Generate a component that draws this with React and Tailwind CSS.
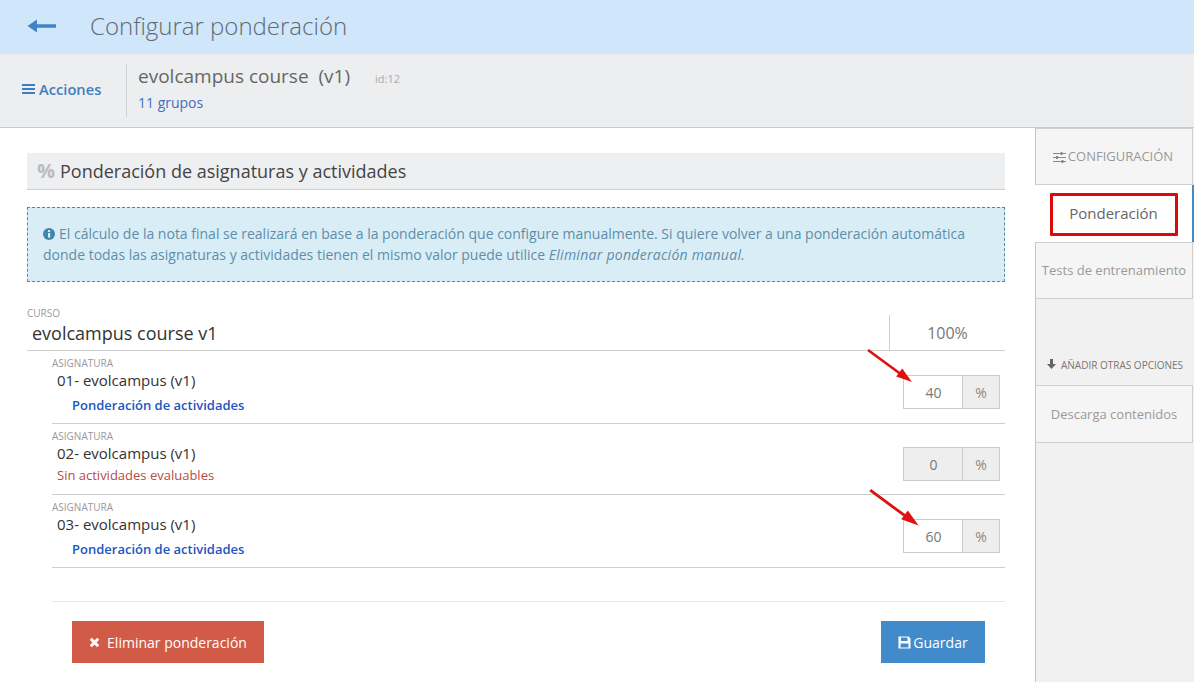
import React from "react";

const font = { fontFamily: '"Open Sans", sans-serif' };

function Arrow({ className }) {
  return (
    <svg className={className} viewBox="0 0 50 40">
      <path d="M2 2 L36 27" stroke="#e01010" strokeWidth="2.6" fill="none" />
      <path d="M46 34 L30.2 28.4 L36.2 20.4 Z" fill="#e01010" />
    </svg>
  );
}

function Row({ num, value, disabled, h, children }) {
  return (
    <div className={`flex justify-between border-b border-[#cfcfcf] ${h}`}>
      <div className="flex flex-col">
        <div className="mt-[7px] h-[11px] text-[10px] leading-[11px] text-[#999] uppercase">Asignatura</div>
        <div className="ml-[5px] mt-[2px] h-[19px] text-[15px] leading-[19px] text-[#333]">{num}- evolcampus (v1)</div>
        {children}
      </div>
      <div className="flex items-center pr-[5px] pt-[10px]">
        <div className={`flex h-[34px] w-[97px] border border-[#ccc] text-[14px] text-[#777] ${disabled ? "bg-[#eeeeee]" : "bg-white"}`}>
          <div className="flex w-[59px] items-center justify-center border-r border-[#ccc] pt-[1px] pl-[1px]">{value}</div>
          <div className="flex flex-1 items-center justify-center bg-[#eeeeee] text-[14px] text-[#8a8a8a]">%</div>
        </div>
      </div>
    </div>
  );
}

function Link() {
  return <div className="ml-[20px] mt-[7px] text-[13px] leading-[17px] font-semibold text-[#1c56bf]">Ponderación de actividades</div>;
}

export default function App() {
  return (
    <div style={font} className="relative flex h-[682px] w-[1194px] flex-col overflow-hidden bg-white">
      <header className="flex h-[54px] items-center bg-[#cfe6fb] pl-[27px]">
        <svg width="30" height="16" viewBox="0 0 30 16" className="mb-[3px]">
          <path d="M29 6.3 H10 V1.5 L0.5 8 L10 14.5 V9.7 H29 Z" fill="#3f84c5" />
        </svg>
        <h1 className="ml-[33px] mb-[2px] text-[24px] font-light leading-[32px] text-[#5f6b73]">Configurar ponderación</h1>
      </header>

      <div className="flex h-[74px] items-center border-b border-[#c9cbcd] bg-[#eceef0]">
        <div className="mb-[3px] flex w-[126px] items-center pl-[22px] text-[14.7px] font-semibold text-[#3f7fbd]">
          <svg width="13" height="12" viewBox="0 0 13 12" className="mr-[4px]">
            <path d="M0 1h13v2H0zM0 5h13v2H0zM0 9h13v2H0z" fill="#3f7fbd" />
          </svg>
          Acciones
        </div>
        <div className="flex h-[53px] flex-col border-l border-[#cfd1d3] pl-[11px]">
          <div className="flex items-baseline">
            <span className="whitespace-pre text-[19px] leading-[24px] text-[#666]">evolcampus course  (v1)</span>
            <span className="ml-[25px] text-[11px] text-[#aaa]">id:12</span>
          </div>
          <div className="mt-[6px] text-[14px] leading-[18px] text-[#3b6fc9]">11 grupos</div>
        </div>
      </div>

      <div className="flex min-h-0 flex-1">
        <main className="relative w-[1035px] pl-[27px] pr-[30px] pt-[25px]">
          <div className="flex h-[37px] items-center border-b border-[#cfd1d3] bg-[#eeeff1] pl-[10px]">
            <span className="mr-[5px] text-[20px] font-bold leading-none text-[#bbbbbb]">%</span>
            <h2 className="text-[18px] leading-[24px] text-[#444]">Ponderación de asignaturas y actividades</h2>
          </div>

          <div className="mt-[17px] h-[75px] border border-dashed border-[#4b8aa8] bg-[#d9edf7] px-[15px] py-[15px] text-[14px] leading-[21px] text-[#5f8da8]">
            <p>
              <svg width="12" height="12" viewBox="0 0 12 12" className="mr-[4px] inline-block align-[-1px]">
                <circle cx="6" cy="6" r="6" fill="#3f86ad" />
                <rect x="5" y="5" width="2.2" height="4.6" fill="#d9edf7" />
                <rect x="5" y="2.2" width="2.2" height="1.8" fill="#d9edf7" />
              </svg>
              El cálculo de la nota final se realizará en base a la ponderación que configure manualmente. Si quiere volver a una ponderación automática donde todas las asignaturas y actividades tienen el mismo valor puede utilice <em className="tracking-[0.28px]">Eliminar ponderación manual.</em>
            </p>
          </div>

          <div className="mt-[25px] flex h-[44px] border-b border-[#cfcfcf]">
            <div className="flex-1">
              <div className="h-[12px] text-[10px] leading-[12px] text-[#999]">CURSO</div>
              <div className="ml-[5px] mt-[2px] text-[18px] leading-[24px] text-[#333]">evolcampus course v1</div>
            </div>
            <div className="mt-[8px] flex w-[116px] items-center justify-center border-l border-[#cfcfcf] text-[16px] text-[#777]">100%</div>
          </div>

          <div className="ml-[25px]">
            <Row num="01" value="40" h="h-[73px]"><Link /></Row>
            <Row num="02" value="0" disabled h="h-[71px]">
              <div className="mt-[4px] text-[13px] leading-[17px] ml-[5px] text-[#b94a48]">Sin actividades evaluables</div>
            </Row>
            <Row num="03" value="60" h="h-[73px]"><Link /></Row>
            <div className="mt-[33px] border-t border-[#e6e6e6]" />
            <div className="mt-[19px] flex justify-between pl-[20px] pr-[20px]">
              <button className="flex h-[42px] w-[192px] items-center justify-center bg-[#d15b47] text-[14px] text-white">
                <svg width="11" height="11" viewBox="0 0 11 11" className="mr-[7px]">
                  <path d="M1.8 1.8 L9.2 9.2 M9.2 1.8 L1.8 9.2" stroke="#fff" strokeWidth="3" />
                </svg>
                Eliminar ponderación
              </button>
              <button className="flex h-[42px] w-[104px] items-center justify-center bg-[#428bca] text-[14px] text-white">
                <svg width="13" height="13" viewBox="0 0 13 13" className="mr-[2px]">
                  <path fillRule="evenodd" d="M0.5 0.5 H10.5 L12.5 2.5 V12.5 H0.5 Z M3 1.5 V5 H9.5 V1.5 Z M2.5 7.5 V11.5 H10.5 V7.5 Z" fill="#fff" />
                </svg>
                Guardar
              </button>
            </div>
          </div>

          <Arrow className="absolute left-[866px] top-[220px] h-[40px] w-[50px]" />
          <Arrow className="absolute left-[868px] top-[360px] h-[44px] w-[55px]" />
        </main>

        <aside className="relative flex-1 border-l border-[#c6c6c6] bg-[#f1f1f1]">
          <div className="flex h-[57px] w-[157px] items-center justify-center border-y border-r border-[#d0d0d0] bg-[#f5f5f5] pr-[2px] pt-[1px] text-[13px] text-[#999]">
            <svg width="13" height="11" viewBox="0 0 13 11" className="mr-[2px]">
              <path d="M0 1.5h13M0 5.5h13M0 9.5h13" stroke="#888" strokeWidth="1" />
              <rect x="7.5" y="0" width="2" height="3" fill="#888" />
              <rect x="3" y="4" width="2" height="3" fill="#888" />
              <rect x="8.5" y="8" width="2" height="3" fill="#888" />
            </svg>
            CONFIGURACIÓN
          </div>
          <div className="ml-[-1px] flex h-[57px] w-[159px] items-center justify-center border-r-2 border-[#428bca] bg-white text-[15px] text-[#666]">Ponderación</div>
          <div className="flex h-[57px] w-[157px] items-center justify-center border-y border-r border-[#d0d0d0] bg-[#f5f5f5] pt-[1px] text-[13px] text-[#999]">Tests de entrenamiento</div>
          <div className="mt-[59px] flex h-[27px] items-start pl-[11px] text-[10px] font-medium leading-[14px] text-[#777]">
            <svg width="9" height="10" viewBox="0 0 9 10" className="mr-[5px] mt-[1px]">
              <path d="M3 0h3v5h3L4.5 10 0 5h3z" fill="#666" />
            </svg>
            AÑADIR OTRAS OPCIONES
          </div>
          <div className="flex h-[58px] w-[157px] items-center justify-center border-y border-r border-[#d0d0d0] bg-[#f5f5f5] pt-[1px] text-[13px] text-[#999]">Descarga contenidos</div>

          <div className="absolute left-[14px] top-[65px] h-[43px] w-[128px] rounded-[1px] border-[3px] border-[#dd0a0a]" />
        </aside>
      </div>
    </div>
  );
}
